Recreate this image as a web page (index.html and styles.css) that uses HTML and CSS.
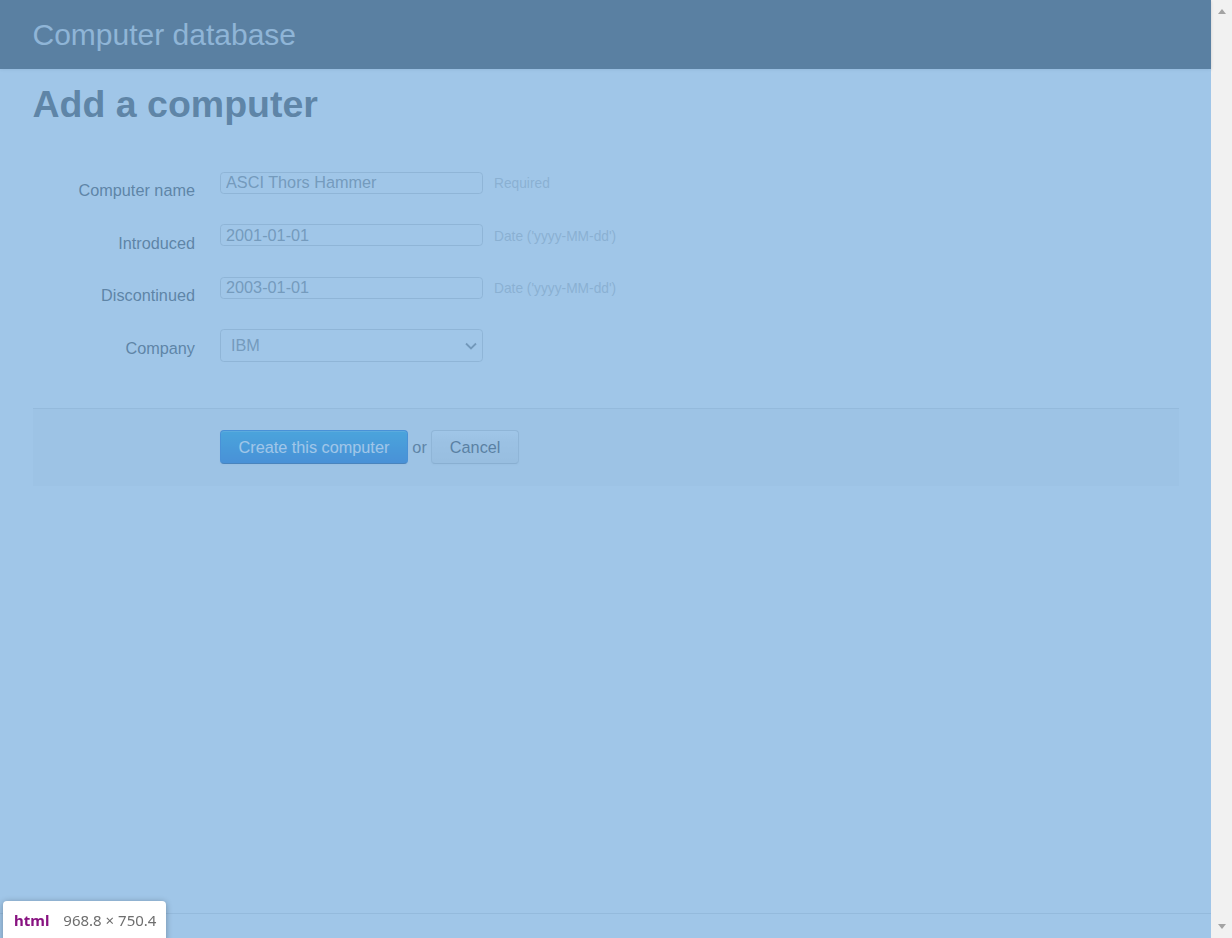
FILE: index.html
```html
<!DOCTYPE html>
<html lang="en">
<head>
<meta charset="utf-8">
<title>Computers database</title>
<link rel="stylesheet" href="styles.css">
</head>
<body>
<div class="viewport">
  <div class="page">
    <header class="topbar"><span class="brand">Computer database</span></header>
    <main class="content">
      <h1 class="title">Add a computer</h1>
      <form class="form">
        <div class="fields">
          <div class="row">
            <label class="label">Computer name</label>
            <div class="field"><input class="input" type="text" value="ASCI Thors Hammer"><span class="help">Required</span></div>
          </div>
          <div class="row">
            <label class="label">Introduced</label>
            <div class="field"><input class="input" type="text" value="2001-01-01"><span class="help">Date ('yyyy-MM-dd')</span></div>
          </div>
          <div class="row">
            <label class="label">Discontinued</label>
            <div class="field"><input class="input" type="text" value="2003-01-01"><span class="help">Date ('yyyy-MM-dd')</span></div>
          </div>
          <div class="row">
            <label class="label">Company</label>
            <div class="field">
              <div class="select-wrap">
                <select class="select"><option>IBM</option></select>
                <svg class="chev" width="12" height="8" viewBox="0 0 12 8"><path d="M1 1.5 L6 6.5 L11 1.5" fill="none" stroke="#7a7a7a" stroke-width="1.8"/></svg>
              </div>
            </div>
          </div>
        </div>
        <div class="actions"><button class="btn primary" type="button">Create this computer</button> or <a class="btn">Cancel</a></div>
      </form>
    </main>
    <div class="footer"></div>
    <div class="highlight"></div>
  </div>
  <div class="scrollbar"><span class="arrow up"></span><span class="arrow down"></span></div>
</div>
<div class="tooltip"><span class="tag">html</span><span class="dims">968.8 × 750.4</span></div>
</body>
</html>
```
FILE: styles.css
```css
html, body {
  margin: 0;
  padding: 0;
  overflow: hidden;
}
body {
  font-family: "Liberation Sans", Arial, sans-serif;
  color: #404040;
  background: #fff;
}
.viewport {
  display: flex;
  height: 938px;
  width: 1232px;
}
.page {
  position: relative;
  flex: 1;
  display: flex;
  flex-direction: column;
  background: #fff;
}
.topbar {
  height: 69px;
  background: #333;
  padding: 0 32.5px;
  box-shadow: 0 1px 3px rgba(0,0,0,0.15);
}
.brand {
  font-size: 30px;
  line-height: 69px;
  color: #ccc;
}
.content {
  padding: 0 32.5px;
}
.title {
  margin: 12.5px 0 0;
  font-size: 37.5px;
  line-height: 45px;
  font-weight: bold;
  color: #404040;
}
.form {
  margin: 0;
  padding-top: 45px;
}
.fields {
  padding-bottom: 24px;
}
.row {
  display: flex;
  align-items: flex-start;
  margin-bottom: 22.5px;
}
.label {
  width: 162.5px;
  margin-right: 25px;
  padding-top: 7.5px;
  font-size: 16.25px;
  line-height: 22.5px;
  text-align: right;
  color: #404040;
}
.field {
  display: flex;
  align-items: baseline;
}
.input {
  box-sizing: border-box;
  width: 263px;
  height: 22px;
  margin: 0;
  padding: 0 5px;
  border: 1px solid #ccc;
  border-radius: 3.75px;
  font-family: "Liberation Sans", Arial, sans-serif;
  font-size: 16.25px;
  line-height: 20px;
  color: #808080;
  background: #fff;
}
.help {
  margin-left: 11px;
  font-size: 13.75px;
  color: #bfbfbf;
}
.select-wrap {
  position: relative;
  width: 263px;
  height: 32.5px;
}
.select {
  -webkit-appearance: none;
  appearance: none;
  box-sizing: border-box;
  width: 263px;
  height: 32.5px;
  margin: 0;
  padding: 0 10px;
  border: 1px solid #ccc;
  border-radius: 3.75px;
  background: #fff;
  font-family: "Liberation Sans", Arial, sans-serif;
  font-size: 16.25px;
  color: #808080;
}
.chev {
  position: absolute;
  right: 6px;
  top: 13px;
  pointer-events: none;
}
.actions {
  border-top: 1px solid #ddd;
  background: #f5f5f5;
  padding: 21px 0 22px 187.5px;
  font-size: 16.25px;
  line-height: 34px;
  color: #404040;
}
.btn {
  display: inline-block;
  box-sizing: border-box;
  height: 34px;
  padding: 0 17.5px;
  border: 1px solid #ccc;
  border-bottom-color: #bbb;
  border-radius: 4px;
  font-family: "Liberation Sans", Arial, sans-serif;
  font-size: 16.25px;
  line-height: 32px;
  color: #333;
  background: linear-gradient(#fff, #f2f2f2 30%, #e6e6e6);
  box-shadow: inset 0 1px 0 rgba(255,255,255,0.2), 0 1px 2px rgba(0,0,0,0.05);
  vertical-align: top;
  cursor: pointer;
}
.btn.primary {
  color: #fff;
  border-color: #0064cd #0064cd #003f81;
  background: linear-gradient(#049cdb, #0064cd);
}
.footer {
  margin-top: auto;
  height: 25px;
  box-sizing: border-box;
  border-top: 1px solid #ddd;
}
.highlight {
  position: absolute;
  inset: 0;
  background: rgba(111, 168, 220, 0.66);
  pointer-events: none;
}
.scrollbar {
  width: 21px;
  flex: none;
  background: #f1f1f1;
  display: flex;
  flex-direction: column;
  align-items: center;
  justify-content: space-between;
  padding: 9px 0;
  box-sizing: border-box;
}
.arrow {
  width: 0;
  height: 0;
  border-left: 4.5px solid transparent;
  border-right: 4.5px solid transparent;
}
.arrow.up {
  border-bottom: 5px solid #a3a3a3;
}
.arrow.down {
  border-top: 5px solid #a3a3a3;
}
.tooltip {
  position: fixed;
  left: 3px;
  top: 901px;
  width: 163px;
  height: 44px;
  box-sizing: border-box;
  padding: 9px 11px 0;
  background: #fff;
  border-radius: 4px;
  box-shadow: 0 1px 6px rgba(0,0,0,0.3);
  font-family: "Noto Sans", "Open Sans", sans-serif;
  font-size: 15px;
  white-space: nowrap;
}
.tag {
  color: #881280;
  font-weight: bold;
  margin-right: 14px;
}
.dims {
  color: #6e6e6e;
}
```
